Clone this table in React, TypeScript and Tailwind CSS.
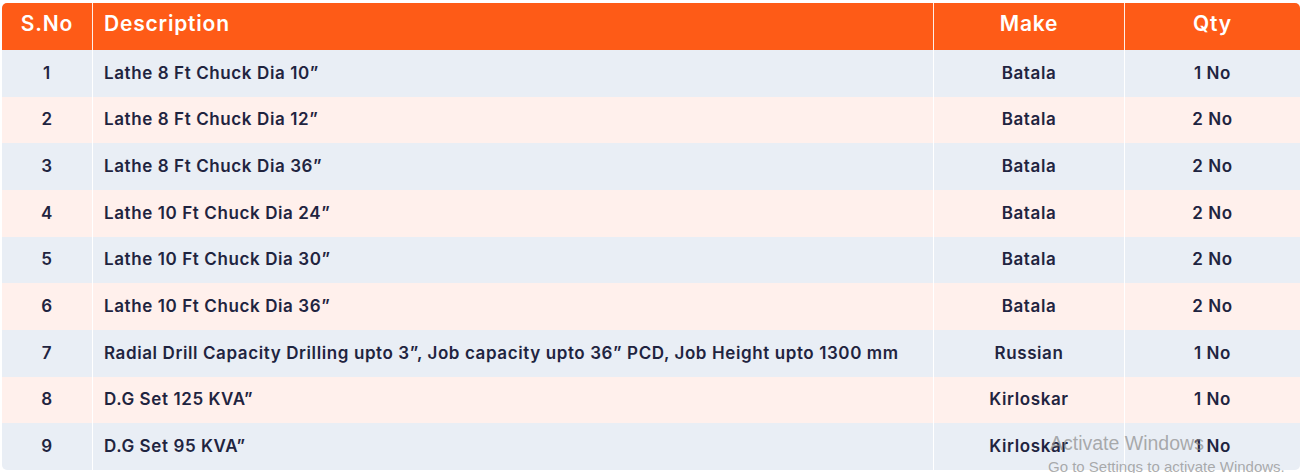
import React from "react";

const rows = [
  ["1", "Lathe 8 Ft Chuck Dia 10\u201D", "Batala", "1 No"],
  ["2", "Lathe 8 Ft Chuck Dia 12\u201D", "Batala", "2 No"],
  ["3", "Lathe 8 Ft Chuck Dia 36\u201D", "Batala", "2 No"],
  ["4", "Lathe 10 Ft Chuck Dia 24\u201D", "Batala", "2 No"],
  ["5", "Lathe 10 Ft Chuck Dia 30\u201D", "Batala", "2 No"],
  ["6", "Lathe 10 Ft Chuck Dia 36\u201D", "Batala", "2 No"],
  ["7", "Radial Drill Capacity Drilling upto 3\u201D, Job capacity upto 36\u201D PCD, Job Height upto 1300 mm", "Russian", "1 No"],
  ["8", "D.G Set 125 KVA\u201D", "Kirloskar", "1 No"],
  ["9", "D.G Set 95 KVA\u201D", "Kirloskar", "1 No"],
];

export default function App() {
  return (
    <div className="relative w-[1302px] h-[473px] bg-white overflow-hidden">
      <div className="pt-[3px] pl-[2px]">
        <div className="w-[1298px] rounded-[5px] overflow-hidden font-['Inter',sans-serif]">
          <div className="grid grid-cols-[90px_1px_840px_1px_190px_1px_175px] h-[47px] bg-[#fe5b17] text-white text-[21px] font-semibold tracking-[0.8px]">
            <div className="flex items-center justify-center pb-[6px]">S.No</div>
            <div className="bg-white/90" />
            <div className="flex items-center pl-[11px] pb-[6px]">Description</div>
            <div className="bg-white/90" />
            <div className="flex items-center justify-center pb-[6px]">Make</div>
            <div className="bg-white/90" />
            <div className="flex items-center justify-center pb-[6px]">Qty</div>
          </div>
          {rows.map((r, i) => (
            <div
              key={i}
              className={`grid grid-cols-[90px_1px_840px_1px_190px_1px_175px] h-[46.67px] text-[17px] font-semibold tracking-[0.6px] text-[#1f2440] ${i % 2 === 0 ? "bg-[#e9eef5]" : "bg-[#fff0ec]"}`}
            >
              <div className="flex items-center justify-center">{r[0]}</div>
              <div className="bg-white" />
              <div className="flex items-center pl-[11px] whitespace-nowrap">{r[1]}</div>
              <div className="bg-white" />
              <div className="flex items-center justify-center">{r[2]}</div>
              <div className="bg-white" />
              <div className="flex items-center justify-center">{r[3]}</div>
            </div>
          ))}
        </div>
      </div>
      <div className="absolute left-[1050px] top-[434px] text-[19.5px] leading-none text-[#8a8a8a]/70 font-['Liberation_Sans',sans-serif] pointer-events-none whitespace-nowrap">
        Activate Windows
      </div>
      <div className="absolute left-[1048px] top-[459px] text-[15px] leading-none text-[#8a8a8a]/70 font-['Liberation_Sans',sans-serif] pointer-events-none whitespace-nowrap">
        Go to Settings to activate Windows.
      </div>
    </div>
  );
}
